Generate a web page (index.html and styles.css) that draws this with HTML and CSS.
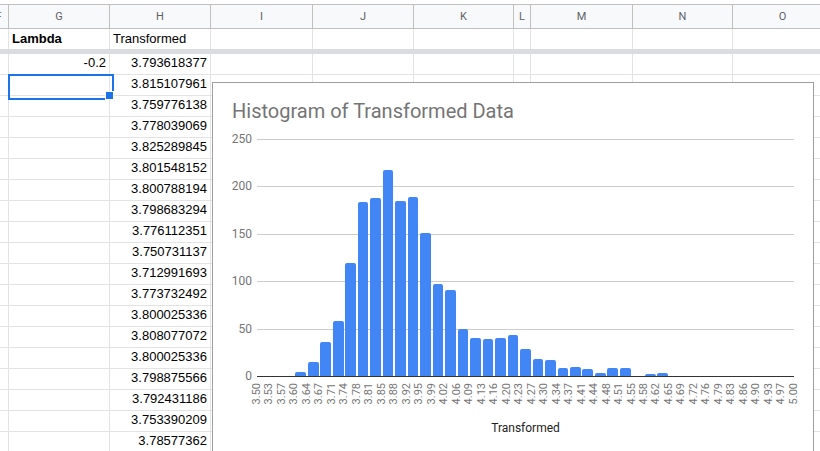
FILE: index.html
```html
<!DOCTYPE html>
<html>
<head>
<meta charset="utf-8">
<title>Sheet</title>
<link rel="stylesheet" href="styles.css">
</head>
<body>
<div class="sheet">
  <div class="row head">
    <div class="hc">F</div><div class="hc">G</div><div class="hc">H</div><div class="hc">I</div><div class="hc">J</div><div class="hc">K</div><div class="hc">L</div><div class="hc">M</div><div class="hc">N</div><div class="hc">O</div>
  </div>
  <div class="row r1">
    <div class="c"></div><div class="c b">Lambda</div><div class="c">Transformed</div><div class="c"></div><div class="c"></div><div class="c"></div><div class="c"></div><div class="c"></div><div class="c"></div><div class="c"></div>
  </div>
  <div class="freeze"></div>
  <div class="row"><div class="c"></div><div class="c n">-0.2</div><div class="c n">3.793618377</div><div class="c"></div><div class="c"></div><div class="c"></div><div class="c"></div><div class="c"></div><div class="c"></div><div class="c"></div></div>
  <div class="row"><div class="c"></div><div class="c sel"></div><div class="c n">3.815107961</div><div class="c"></div><div class="c"></div><div class="c"></div><div class="c"></div><div class="c"></div><div class="c"></div><div class="c"></div></div>
  <div class="row"><div class="c"></div><div class="c"></div><div class="c n">3.759776138</div><div class="c"></div><div class="c"></div><div class="c"></div><div class="c"></div><div class="c"></div><div class="c"></div><div class="c"></div></div>
  <div class="row"><div class="c"></div><div class="c"></div><div class="c n">3.778039069</div><div class="c"></div><div class="c"></div><div class="c"></div><div class="c"></div><div class="c"></div><div class="c"></div><div class="c"></div></div>
  <div class="row"><div class="c"></div><div class="c"></div><div class="c n">3.825289845</div><div class="c"></div><div class="c"></div><div class="c"></div><div class="c"></div><div class="c"></div><div class="c"></div><div class="c"></div></div>
  <div class="row"><div class="c"></div><div class="c"></div><div class="c n">3.801548152</div><div class="c"></div><div class="c"></div><div class="c"></div><div class="c"></div><div class="c"></div><div class="c"></div><div class="c"></div></div>
  <div class="row"><div class="c"></div><div class="c"></div><div class="c n">3.800788194</div><div class="c"></div><div class="c"></div><div class="c"></div><div class="c"></div><div class="c"></div><div class="c"></div><div class="c"></div></div>
  <div class="row"><div class="c"></div><div class="c"></div><div class="c n">3.798683294</div><div class="c"></div><div class="c"></div><div class="c"></div><div class="c"></div><div class="c"></div><div class="c"></div><div class="c"></div></div>
  <div class="row"><div class="c"></div><div class="c"></div><div class="c n">3.776112351</div><div class="c"></div><div class="c"></div><div class="c"></div><div class="c"></div><div class="c"></div><div class="c"></div><div class="c"></div></div>
  <div class="row"><div class="c"></div><div class="c"></div><div class="c n">3.750731137</div><div class="c"></div><div class="c"></div><div class="c"></div><div class="c"></div><div class="c"></div><div class="c"></div><div class="c"></div></div>
  <div class="row"><div class="c"></div><div class="c"></div><div class="c n">3.712991693</div><div class="c"></div><div class="c"></div><div class="c"></div><div class="c"></div><div class="c"></div><div class="c"></div><div class="c"></div></div>
  <div class="row"><div class="c"></div><div class="c"></div><div class="c n">3.773732492</div><div class="c"></div><div class="c"></div><div class="c"></div><div class="c"></div><div class="c"></div><div class="c"></div><div class="c"></div></div>
  <div class="row"><div class="c"></div><div class="c"></div><div class="c n">3.800025336</div><div class="c"></div><div class="c"></div><div class="c"></div><div class="c"></div><div class="c"></div><div class="c"></div><div class="c"></div></div>
  <div class="row"><div class="c"></div><div class="c"></div><div class="c n">3.808077072</div><div class="c"></div><div class="c"></div><div class="c"></div><div class="c"></div><div class="c"></div><div class="c"></div><div class="c"></div></div>
  <div class="row"><div class="c"></div><div class="c"></div><div class="c n">3.800025336</div><div class="c"></div><div class="c"></div><div class="c"></div><div class="c"></div><div class="c"></div><div class="c"></div><div class="c"></div></div>
  <div class="row"><div class="c"></div><div class="c"></div><div class="c n">3.798875566</div><div class="c"></div><div class="c"></div><div class="c"></div><div class="c"></div><div class="c"></div><div class="c"></div><div class="c"></div></div>
  <div class="row"><div class="c"></div><div class="c"></div><div class="c n">3.792431186</div><div class="c"></div><div class="c"></div><div class="c"></div><div class="c"></div><div class="c"></div><div class="c"></div><div class="c"></div></div>
  <div class="row"><div class="c"></div><div class="c"></div><div class="c n">3.753390209</div><div class="c"></div><div class="c"></div><div class="c"></div><div class="c"></div><div class="c"></div><div class="c"></div><div class="c"></div></div>
  <div class="row"><div class="c"></div><div class="c"></div><div class="c n">3.78577362</div><div class="c"></div><div class="c"></div><div class="c"></div><div class="c"></div><div class="c"></div><div class="c"></div><div class="c"></div></div>
</div>

<div class="chart">
  <div class="title">Histogram of Transformed Data</div>
  <div class="plotrow">
    <div class="ylabels"><span>250</span><span>200</span><span>150</span><span>100</span><span>50</span><span>0</span></div>
    <div class="plot">
      <div class="grid"><div></div><div></div><div></div><div></div><div></div></div>
      <div class="bars">
        <div class="bin"></div>
        <div class="bin"></div>
        <div class="bin"></div>
        <div class="bin"><div class="bar" style="height:4px"></div></div>
        <div class="bin"><div class="bar" style="height:14px"></div></div>
        <div class="bin"><div class="bar" style="height:34px"></div></div>
        <div class="bin"><div class="bar" style="height:55px"></div></div>
        <div class="bin"><div class="bar" style="height:113px"></div></div>
        <div class="bin"><div class="bar" style="height:174px"></div></div>
        <div class="bin"><div class="bar" style="height:178px"></div></div>
        <div class="bin"><div class="bar" style="height:206px"></div></div>
        <div class="bin"><div class="bar" style="height:175px"></div></div>
        <div class="bin"><div class="bar" style="height:179px"></div></div>
        <div class="bin"><div class="bar" style="height:143px"></div></div>
        <div class="bin"><div class="bar" style="height:92px"></div></div>
        <div class="bin"><div class="bar" style="height:86px"></div></div>
        <div class="bin"><div class="bar" style="height:47px"></div></div>
        <div class="bin"><div class="bar" style="height:38px"></div></div>
        <div class="bin"><div class="bar" style="height:37px"></div></div>
        <div class="bin"><div class="bar" style="height:38px"></div></div>
        <div class="bin"><div class="bar" style="height:41px"></div></div>
        <div class="bin"><div class="bar" style="height:27px"></div></div>
        <div class="bin"><div class="bar" style="height:17px"></div></div>
        <div class="bin"><div class="bar" style="height:16px"></div></div>
        <div class="bin"><div class="bar" style="height:8px"></div></div>
        <div class="bin"><div class="bar" style="height:9px"></div></div>
        <div class="bin"><div class="bar" style="height:7px"></div></div>
        <div class="bin"><div class="bar" style="height:3px"></div></div>
        <div class="bin"><div class="bar" style="height:8px"></div></div>
        <div class="bin"><div class="bar" style="height:8px"></div></div>
        <div class="bin"></div>
        <div class="bin"><div class="bar" style="height:2px"></div></div>
        <div class="bin"><div class="bar" style="height:3px"></div></div>
        <div class="bin"></div>
        <div class="bin"></div>
        <div class="bin"></div>
        <div class="bin"></div>
        <div class="bin"></div>
        <div class="bin"></div>
        <div class="bin"></div>
        <div class="bin"></div>
        <div class="bin"></div>
        <div class="bin"></div>
      </div>
    </div>
  </div>
  <div class="xlabels">
    <span><i>3.50</i></span><span><i>3.53</i></span><span><i>3.57</i></span><span><i>3.60</i></span><span><i>3.64</i></span><span><i>3.67</i></span><span><i>3.71</i></span><span><i>3.74</i></span><span><i>3.78</i></span><span><i>3.81</i></span><span><i>3.85</i></span>
    <span><i>3.88</i></span><span><i>3.92</i></span><span><i>3.95</i></span><span><i>3.99</i></span><span><i>4.02</i></span><span><i>4.06</i></span><span><i>4.09</i></span><span><i>4.13</i></span><span><i>4.16</i></span><span><i>4.20</i></span><span><i>4.23</i></span>
    <span><i>4.27</i></span><span><i>4.30</i></span><span><i>4.34</i></span><span><i>4.37</i></span><span><i>4.41</i></span><span><i>4.44</i></span><span><i>4.48</i></span><span><i>4.51</i></span><span><i>4.55</i></span><span><i>4.58</i></span><span><i>4.62</i></span>
    <span><i>4.65</i></span><span><i>4.69</i></span><span><i>4.72</i></span><span><i>4.76</i></span><span><i>4.79</i></span><span><i>4.83</i></span><span><i>4.86</i></span><span><i>4.90</i></span><span><i>4.93</i></span><span><i>4.97</i></span><span><i>5.00</i></span>
  </div>
  <div class="axistitle">Transformed</div>
</div>
</body>
</html>
```

FILE: styles.css
```css
* { box-sizing: border-box; }
html, body { margin: 0; padding: 0; }
body {
  width: 820px;
  height: 451px;
  overflow: hidden;
  background: #fff;
  position: relative;
  font-family: "Liberation Sans", Arial, sans-serif;
  color: #000;
}

.sheet { margin-left: -11px; padding-top: 4px; }

.row {
  display: grid;
  grid-template-columns: 20px 101px 101px 102px 101px 100px 17px 102px 100px 100px;
  height: 21px;
}

.head { height: 25px; }
.hc {
  background: #f8f9fa;
  border-top: 1px solid #c0c0c0;
  border-bottom: 1px solid #c0c0c0;
  border-right: 1px solid #c0c0c0;
  font-family: Roboto, "Liberation Sans", sans-serif;
  font-size: 11px;
  line-height: 23px;
  color: #5f6368;
  text-align: center;
  overflow: hidden;
}

.c {
  height: 21px;
  border-right: 1px solid #e2e3e3;
  border-bottom: 1px solid #e2e3e3;
  font-size: 13px;
  line-height: 18px;
  padding: 0 3px 2px;
  white-space: nowrap;
  overflow: hidden;
}

.r1 { height: 20px; }
.r1 .c { height: 20px; border-bottom: none; padding-top: 1px; }
.b { font-weight: bold; }
.n { text-align: right; }

.freeze { height: 5px; background: #dadce0; }

.sel { position: relative; overflow: visible; }
.sel::after {
  content: "";
  position: absolute;
  left: -1px;
  top: -1px;
  width: 102px;
  height: 22px;
  border: 2px solid #1a73e8;
}
.sel::before {
  content: "";
  position: absolute;
  left: 96px;
  top: 16px;
  width: 7px;
  height: 7px;
  background: #1a73e8;
  border: 1px solid #fff;
  z-index: 2;
}

/* chart overlay */
.chart {
  position: absolute;
  left: 212px;
  top: 82px;
  width: 602px;
  height: 390px;
  border: 1px solid #9e9e9e;
  background: #fff;
  font-family: Roboto, "Liberation Sans", sans-serif;
}
.title {
  padding: 16px 0 0 19px;
  font-size: 20px;
  line-height: 24px;
  color: #757575;
}
.plotrow {
  display: grid;
  grid-template-columns: 39px 537px;
  column-gap: 5px;
  margin-top: 16px;
}
.ylabels {
  height: 237px;
  display: flex;
  flex-direction: column;
  justify-content: space-between;
  align-items: flex-end;
  font-size: 12px;
  color: #757575;
}
.ylabels span { height: 0; line-height: 0; }

.plot { display: grid; }
.plot > * { grid-area: 1 / 1; }
.grid {
  height: 238px;
  display: flex;
  flex-direction: column;
  border-bottom: 1px solid #333;
}
.grid div { flex: 1; border-top: 1px solid #ccc; }
.bars {
  height: 237px;
  align-self: start;
  display: flex;
  align-items: flex-end;
}
.bin {
  flex: 1;
  height: 100%;
  padding: 0 0.9px;
  display: flex;
  align-items: flex-end;
}
.bar {
  width: 100%;
  background: #4285f4;
  border-radius: 2px 2px 0 0;
}

.xlabels {
  display: flex;
  margin-left: 37.75px;
  width: 549.6px;
  margin-top: 6px;
}
.xlabels span { flex: 1; display: flex; justify-content: center; }
.xlabels i {
  font-style: normal;
  writing-mode: vertical-rl;
  transform: rotate(180deg);
  font-size: 11px;
  line-height: 12px;
  color: #757575;
}
.axistitle {
  margin: 17px 0 0 44px;
  width: 537px;
  text-align: center;
  font-size: 12px;
  line-height: 14px;
  color: #222;
}
```
